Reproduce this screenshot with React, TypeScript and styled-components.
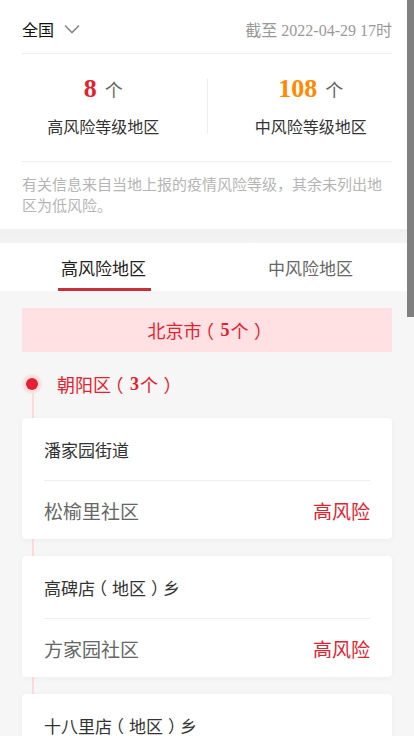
import React from 'react';
import styled, { createGlobalStyle } from 'styled-components';

const RED = '#e2232f';
const ORANGE = '#ff8a00';

type Community = { name: string; level: string };
type Street = { name: string; area?: string; suffix?: string; communities: Community[] };
type District = { name: string; count: number; streets: Street[] };

const chaoyang: District = {
  name: '朝阳区',
  count: 3,
  streets: [
    { name: '潘家园街道', communities: [{ name: '松榆里社区', level: '高风险' }] },
    { name: '高碑店', area: '地区', suffix: '乡', communities: [{ name: '方家园社区', level: '高风险' }] },
    { name: '十八里店', area: '地区', suffix: '乡', communities: [{ name: '周庄嘉园社区', level: '高风险' }] },
  ],
};

const fengtai: District = {
  name: '丰台区',
  count: 2,
  streets: [
    { name: '卢沟桥街道', communities: [{ name: '靛厂新村', level: '高风险' }] },
    { name: '新村街道', communities: [{ name: '怡海花园', level: '高风险' }] },
  ],
};

const GlobalStyle = createGlobalStyle`
  html {
    scrollbar-width: none;
  }
  html::-webkit-scrollbar {
    display: none;
  }
  body {
    margin: 0;
    background: #f6f6f6;
    font-family: "Liberation Serif", "Noto Sans CJK SC", serif;
    color: #333;
  }
`;

const Top = styled.div`
  background: #fff;
  padding: 0 22px;
`;

const HeaderRow = styled.div`
  height: 54px;
  display: flex;
  align-items: center;
  justify-content: space-between;
  border-bottom: 1px solid #eee;
  box-sizing: border-box;
  padding-top: 4px;
`;

const AreaPicker = styled.div`
  display: flex;
  align-items: center;
  gap: 10px;
  font-size: 16px;
  color: #111;
`;

const UpdateTime = styled.div`
  font-size: 16px;
  color: #999;
`;

const Stats = styled.div`
  display: flex;
  align-items: center;
  margin: 0 -22px;
  padding: 20px 0 22px;
`;

const StatCol = styled.div`
  flex: 1;
  text-align: center;
`;

const StatNum = styled.div<{ $color: string }>`
  height: 30px;
  line-height: 30px;
  span {
    font-size: 26px;
    font-weight: bold;
    color: ${({ $color }) => $color};
    margin-right: 8px;
  }
  em {
    font-style: normal;
    font-size: 18px;
    color: #666;
  }
`;

const StatLabel = styled.div`
  margin-top: 13px;
  font-size: 16px;
  line-height: 22px;
  color: #333;
`;

const VLine = styled.div`
  width: 1px;
  height: 55px;
  background: #eee;
`;

const Note = styled.p`
  margin: 0;
  border-top: 1px solid #eee;
  padding: 13px 0 12px;
  font-size: 15px;
  line-height: 21px;
  color: #b5b5b5;
`;

const Band = styled.div`
  height: 14px;
  background: linear-gradient(#efefef, #f4f4f4);
`;

const Tabs = styled.div`
  display: flex;
  height: 48px;
  background: #fff;
`;

const Tab = styled.div<{ $active?: boolean }>`
  flex: 1;
  display: flex;
  justify-content: center;
  align-items: center;
  position: relative;
  font-size: 17px;
  color: ${({ $active }) => ($active ? '#222' : '#666')};
  &::after {
    content: '';
    display: ${({ $active }) => ($active ? 'block' : 'none')};
    position: absolute;
    bottom: 0;
    left: 50%;
    width: 93px;
    margin-left: -46px;
    height: 3px;
    background: #c9303c;
  }
`;

const List = styled.div`
  padding: 17px 22px 20px;
`;

// full-width brackets sit in the middle of their cell
const Paren = styled.span<{ $close?: boolean }>`
  display: inline-block;
  transform: translateX(${({ $close }) => ($close ? '0.3em' : '-0.3em')});
`;

const CityTitle = styled.div`
  height: 44px;
  display: flex;
  align-items: center;
  justify-content: center;
  background: #ffe0e3;
  color: ${RED};
  font-size: 18px;
  b {
    margin: 0 1px;
  }
`;

const DistrictBlock = styled.div`
  position: relative;
  padding-top: 16px;
  &::before {
    content: '';
    position: absolute;
    left: 10px;
    top: 32px;
    bottom: 0;
    width: 2px;
    background: #ffdadd;
  }
`;

const DistrictHead = styled.div`
  display: flex;
  align-items: center;
  height: 32px;
  margin-bottom: 18px;
  font-size: 18px;
  color: ${RED};
  b {
    margin: 0 1px;
  }
`;

const Dot = styled.span`
  position: relative;
  z-index: 1;
  width: 20px;
  height: 20px;
  border-radius: 50%;
  background: #ffe0e3;
  display: flex;
  align-items: center;
  justify-content: center;
  margin-right: 15px;
  &::after {
    content: '';
    width: 12px;
    height: 12px;
    border-radius: 50%;
    background: ${RED};
  }
`;

const Card = styled.div`
  position: relative;
  z-index: 1;
  background: #fff;
  border-radius: 4px;
  box-shadow: 0 1px 6px rgba(0, 0, 0, 0.04);
  margin-bottom: 17px;
  padding: 0 22px;
`;

const StreetRow = styled.div`
  height: 63px;
  display: flex;
  align-items: center;
  border-bottom: 1px solid #eee;
  box-sizing: border-box;
  font-size: 17px;
  color: #333;
`;

const CommunityRow = styled.div`
  height: 58px;
  display: flex;
  align-items: center;
  justify-content: space-between;
  font-size: 19px;
  color: #666;
  & + & {
    border-top: 1px solid #eee;
  }
`;

const Level = styled.span`
  color: ${RED};
`;

const ScrollThumb = styled.div`
  position: fixed;
  top: 0;
  right: 0;
  width: 7px;
  height: 317px;
  background: #808080;
  z-index: 10;
`;

const Chevron = () => (
  <svg width="16" height="10" viewBox="0 0 16 10" fill="none">
    <path d="M1 1.5 L8 8.5 L15 1.5" stroke="#888" strokeWidth="1.6" />
  </svg>
);

const Count: React.FC<{ n: number }> = ({ n }) => (
  <>
    <Paren>（</Paren>
    <b>{n}</b>个<Paren $close>）</Paren>
  </>
);

const StreetName: React.FC<{ s: Street }> = ({ s }) => (
  <span>
    {s.name}
    {s.area && (
      <>
        <Paren>（</Paren>
        {s.area}
        <Paren $close>）</Paren>
      </>
    )}
    {s.suffix}
  </span>
);

const DistrictView: React.FC<{ d: District }> = ({ d }) => (
  <DistrictBlock>
    <DistrictHead>
      <Dot />
      {d.name}
      <Count n={d.count} />
    </DistrictHead>
    {d.streets.map((s) => (
      <Card key={s.name}>
        <StreetRow>
          <StreetName s={s} />
        </StreetRow>
        {s.communities.map((c) => (
          <CommunityRow key={c.name}>
            <span>{c.name}</span>
            <Level>{c.level}</Level>
          </CommunityRow>
        ))}
      </Card>
    ))}
  </DistrictBlock>
);

const App: React.FC = () => {
  return (
    <>
      <GlobalStyle />
      <Top>
        <HeaderRow>
          <AreaPicker>
            全国
            <Chevron />
          </AreaPicker>
          <UpdateTime>截至 2022-04-29 17时</UpdateTime>
        </HeaderRow>
        <Stats>
          <StatCol>
            <StatNum $color={RED}>
              <span>8</span>
              <em>个</em>
            </StatNum>
            <StatLabel>高风险等级地区</StatLabel>
          </StatCol>
          <VLine />
          <StatCol>
            <StatNum $color={ORANGE}>
              <span>108</span>
              <em>个</em>
            </StatNum>
            <StatLabel>中风险等级地区</StatLabel>
          </StatCol>
        </Stats>
        <Note>有关信息来自当地上报的疫情风险等级，其余未列出地区为低风险。</Note>
      </Top>
      <Band />
      <Tabs>
        <Tab $active>高风险地区</Tab>
        <Tab>中风险地区</Tab>
      </Tabs>
      <List>
        <CityTitle>
          北京市
          <Count n={5} />
        </CityTitle>
        <DistrictView d={chaoyang} />
        <DistrictView d={fengtai} />
      </List>
      <ScrollThumb />
    </>
  );
};

export default App;
